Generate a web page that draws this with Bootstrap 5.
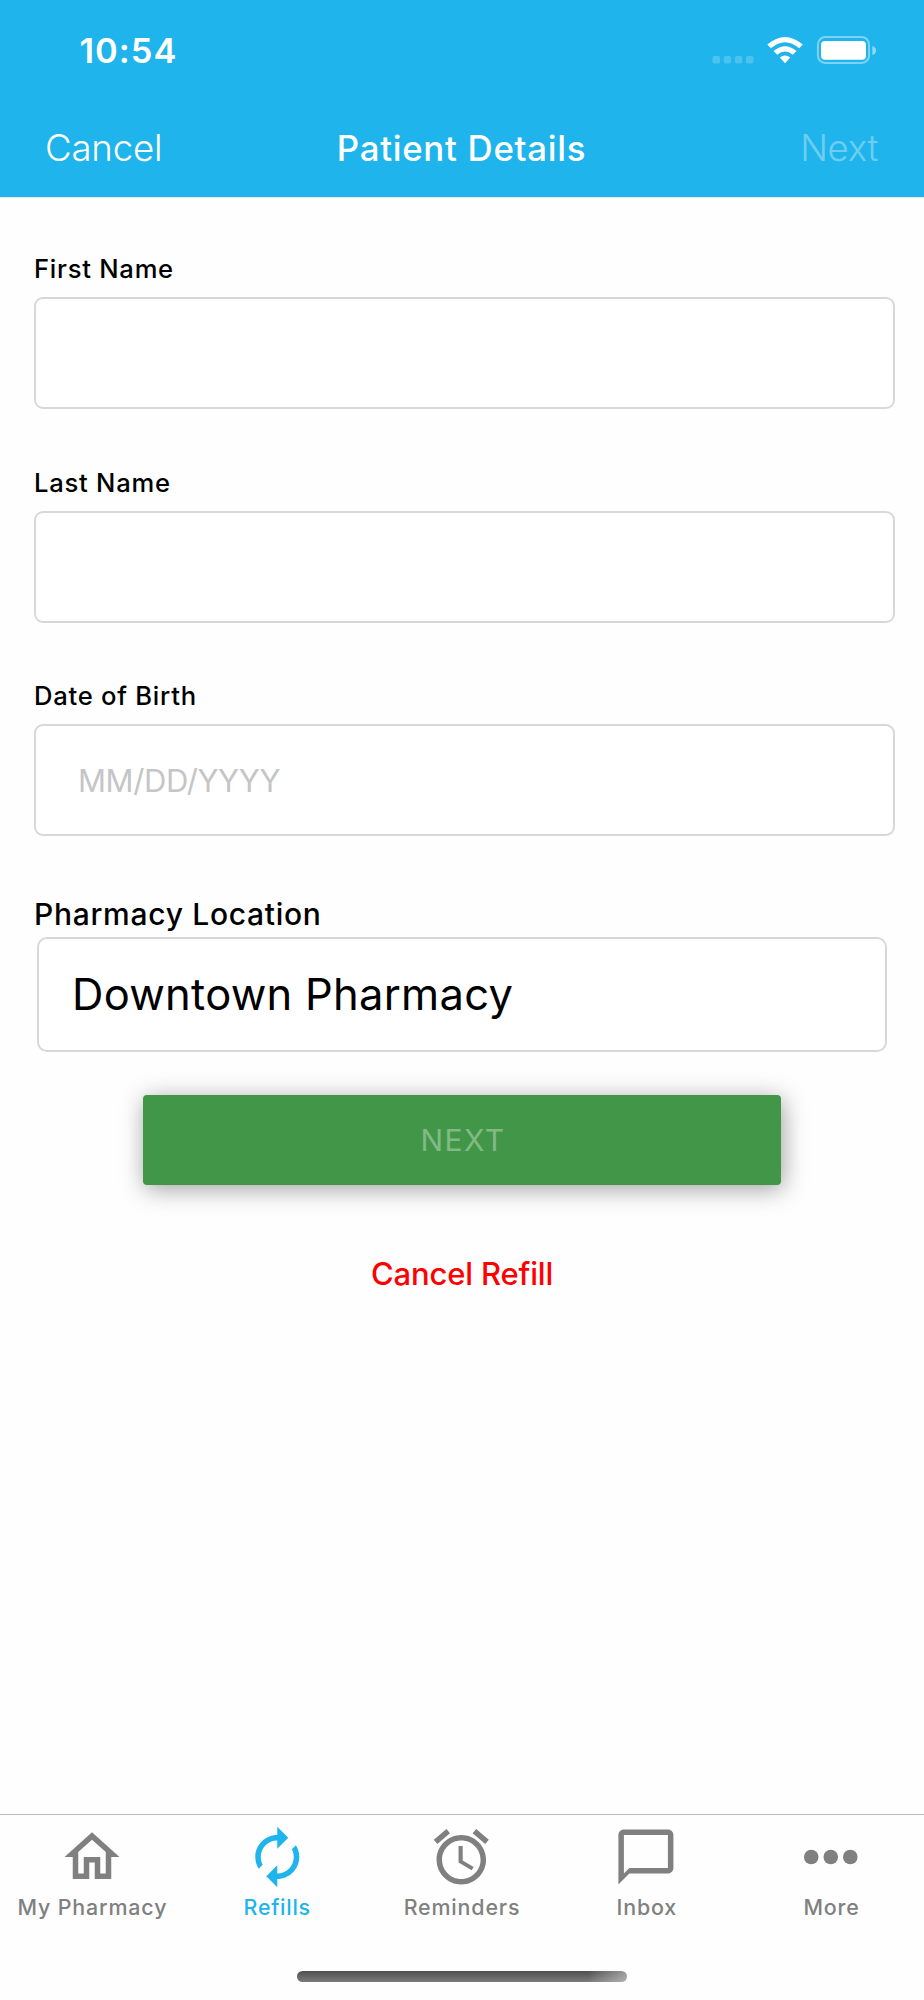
<!DOCTYPE html>
<html lang="en">
<head>
<meta charset="utf-8">
<meta name="viewport" content="width=device-width, initial-scale=1">
<title>Patient Details</title>
<link href="https://cdn.jsdelivr.net/npm/bootstrap@5.3.0/dist/css/bootstrap.min.css" rel="stylesheet">
<style>
  :root { --brand: #1fb4eb; --tab-grey: #808080; --line: #d8d8d8; }
  body { font-family: Inter, "Liberation Sans", sans-serif; color: #000; background: #fefefe; }
  .screen { height: 2000px; }
  .app-header { height: 197px; background: var(--brand); color: #fff; box-shadow: 0 1px 0 #e4e9ec; }
  .status-bar { height: 102px; padding-left: 79.5px; }
  .clock { font-size: 34.5px; font-weight: 600; letter-spacing: 1px; line-height: 102px; }
  .nav-row { height: 92px; padding: 0 46px 0 45px; line-height: 92px; }
  .nav-row a { font-size: 36.6px; font-weight: 350; color: #fff; letter-spacing: -.2px; flex: 1 1 0; }
  .nav-row a.next-link { letter-spacing: -.3px; opacity: .35; }
  .nav-row h1 { font-size: 34.8px; font-weight: 500; letter-spacing: .72px; line-height: inherit; }
  .patient-form { padding: 56px 29px 0 34px; }
  .field { margin-bottom: 57.5px; }
  .field label { display: block; font-size: 25.6px; font-weight: 500; letter-spacing: .75px; line-height: 32px; margin-bottom: 12px; }
  .field .form-control { height: 112px; border: 2px solid var(--line); border-radius: 9px; padding: 0 42px; background: #fff; font-size: 31px; letter-spacing: -.4px; }
  .field .form-control::placeholder { color: #c5c5c7; opacity: 1; }
  .location-label { font-size: 30px; font-weight: 500; letter-spacing: .7px; line-height: 40px; margin-bottom: 3px; }
  .location-box { height: 115px; margin: 0 8px 0 3px; border: 2px solid var(--line); border-radius: 10px; padding: 1px 0 0 33px; font-size: 43.5px; letter-spacing: .27px; background: #fff; }
  .next-btn { width: 638px; height: 90px; margin: 43px 0 0 109px; padding: 2px 0 0 2px; border: 0; border-radius: 4px; font-size: 30px; letter-spacing: 1.4px; box-shadow: 2px 4px 24px rgba(0,0,0,.38); }
  .next-btn:disabled { background: #429647; color: rgba(255,255,255,.35); }
  .cancel-refill { font-size: 31px; font-weight: 500; letter-spacing: -.17px; line-height: 40px; color: #f00; margin: 69px 0 0 -5px; }
  .tab-bar { height: 186px; border-top: 1px solid #bcbcbc; padding-top: 9px; }
  .tab-bar a { flex: 1 1 0; color: var(--tab-grey); font-size: 21.4px; font-weight: 450; letter-spacing: .86px; line-height: 26px; }
  .tab-bar a.active { color: var(--brand); font-weight: 500; letter-spacing: .75px; }
  .tab-bar svg { width: 66px; height: 66px; fill: currentColor; margin-bottom: 4px; }
  .home-indicator { width: 330px; height: 11px; margin-top: 51px; border-radius: 5.5px; background: linear-gradient(90deg, transparent 88%, rgba(255,255,255,.42)), linear-gradient(#4f4f4f, #7b7b7b); }
</style>
</head>
<body>
<div class="screen d-flex flex-column overflow-hidden">
  <header class="app-header flex-shrink-0">
    <div class="status-bar d-flex justify-content-between">
      <span class="clock">10:54</span>
      <svg width="218" height="102" viewBox="706 0 218 102" fill="#fff" aria-hidden="true">
        <g fill-opacity=".2">
          <rect x="712.5" y="56" width="7.6" height="7.4" rx="2"/>
          <rect x="723.6" y="56" width="7.6" height="7.4" rx="2"/>
          <rect x="734.8" y="56" width="7.6" height="7.4" rx="2"/>
          <rect x="745.9" y="56" width="7.6" height="7.4" rx="2"/>
        </g>
        <path d="M767.3 44.6Q785 29.4 802.8 44.6L799.2 48.3Q785 36.2 770.9 48.3Z"/>
        <path d="M773.6 51Q785 41.4 796.5 51L792.9 54.7Q785 48.2 777.2 54.7Z"/>
        <path d="M779.8 57.6Q785 53.2 790.3 57.6L785 63.2Z"/>
        <rect x="817.9" y="37" width="51.2" height="26" rx="7.5" fill="none" stroke="#fff" stroke-opacity=".42" stroke-width="2"/>
        <rect x="821" y="41" width="45" height="18.8" rx="4"/>
        <path d="M872.4 46Q876 47 876 50.5T872.4 55Z" fill-opacity=".5"/>
      </svg>
    </div>
    <nav class="nav-row d-flex align-items-center">
      <a class="text-decoration-none" href="#">Cancel</a>
      <h1 class="m-0">Patient Details</h1>
      <a class="next-link text-decoration-none text-end" href="#">Next</a>
    </nav>
  </header>

  <main class="patient-form flex-grow-1">
    <div class="field">
      <label for="first">First Name</label>
      <input class="form-control" id="first" type="text">
    </div>
    <div class="field">
      <label for="last">Last Name</label>
      <input class="form-control" id="last" type="text">
    </div>
    <div class="field">
      <label for="dob">Date of Birth</label>
      <input class="form-control" id="dob" type="text" placeholder="MM/DD/YYYY">
    </div>
    <div class="location-label">Pharmacy Location</div>
    <div class="location-box d-flex align-items-center">Downtown Pharmacy</div>
    <button class="next-btn d-block" type="button" disabled>NEXT</button>
    <div class="cancel-refill text-center">Cancel Refill</div>
  </main>

  <footer class="tab-bar flex-shrink-0">
    <nav class="d-flex">
      <a class="d-flex flex-column align-items-center text-decoration-none" href="#">
        <svg viewBox="0 0 24 24"><path d="M12 5.69l5 4.5V18h-2v-6H9v6H7v-7.81l5-4.5M12 3L2 12h3v8h6v-6h2v6h6v-8h3L12 3z"/></svg>My Pharmacy</a>
      <a class="active d-flex flex-column align-items-center text-decoration-none" href="#">
        <svg viewBox="-0.1 0 24 24"><path d="M12 6v3l4-4-4-4v3c-4.42 0-8 3.58-8 8 0 1.57.46 3.03 1.24 4.26L6.7 14.8c-.45-.83-.7-1.79-.7-2.8 0-3.31 2.69-6 6-6zm6.76 1.74L17.3 9.2c.44.84.7 1.79.7 2.8 0 3.31-2.69 6-6 6v-3l-4 4 4 4v-3c4.42 0 8-3.58 8-8 0-1.57-.46-3.03-1.24-4.26z"/></svg>Refills</a>
      <a class="d-flex flex-column align-items-center text-decoration-none" href="#">
        <svg viewBox="0.25 0 24 24"><path d="M22 5.72l-4.6-3.86-1.29 1.53 4.6 3.86L22 5.72zM7.88 3.39L6.6 1.86 2 5.71l1.29 1.53 4.59-3.85zM12.5 8H11v6l4.75 2.85.75-1.23-4-2.37V8zM12 4c-4.97 0-9 4.03-9 9s4.02 9 9 9c4.97 0 9-4.03 9-9s-4.03-9-9-9zm0 16c-3.87 0-7-3.13-7-7s3.13-7 7-7 7 3.13 7 7-3.13 7-7 7z"/></svg>Reminders</a>
      <a class="d-flex flex-column align-items-center text-decoration-none" href="#">
        <svg viewBox="0.4 0 24 24"><path d="M20 2H4c-1.1 0-2 .9-2 2v18l4-4h14c1.1 0 2-.9 2-2V4c0-1.1-.9-2-2-2zm0 14H6l-2 2V4h16v12z"/></svg>Inbox</a>
      <a class="d-flex flex-column align-items-center text-decoration-none" href="#">
        <svg viewBox="0.4 0 24 24"><circle cx="4.85" cy="12" r="2.65"/><circle cx="11.95" cy="12" r="2.65"/><circle cx="19.05" cy="12" r="2.65"/></svg>More</a>
    </nav>
    <div class="home-indicator mx-auto"></div>
  </footer>
</div>
<script src="https://cdn.jsdelivr.net/npm/bootstrap@5.3.0/dist/js/bootstrap.bundle.min.js"></script>
</body>
</html>
